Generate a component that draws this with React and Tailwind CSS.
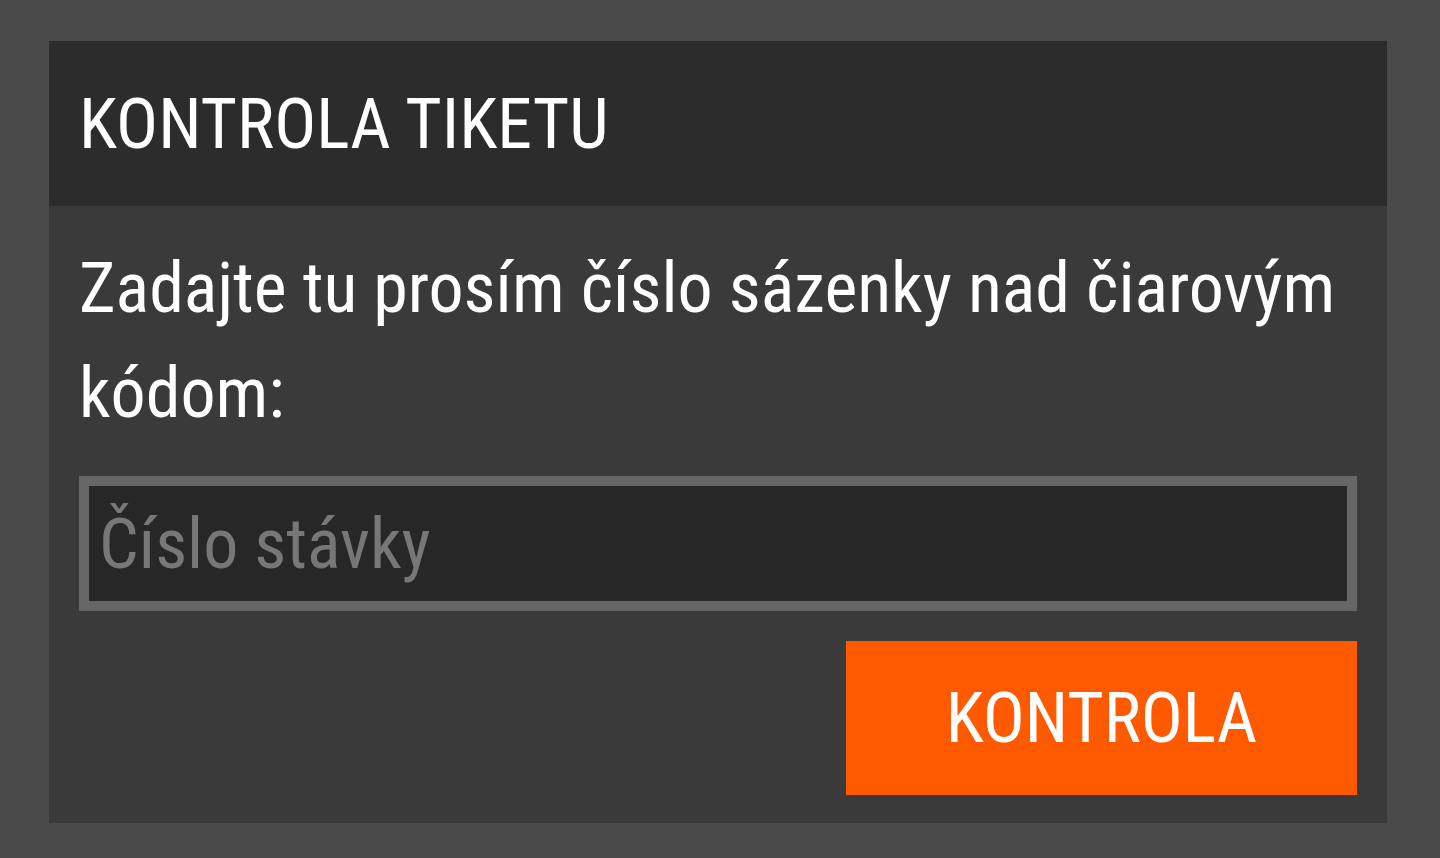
import React from 'react';

const font = { fontFamily: '"Roboto Condensed", Roboto, "Liberation Sans", sans-serif' };

export default function App() {
  return (
    <div className="min-h-screen bg-[#4a4a4a] pt-[41px] pl-[49px] pr-[53px] pb-[35px]" style={font}>
      <div className="bg-[#3a3a3a] font-stretch-condensed">
        {/* Header */}
        <div className="h-[165px] bg-[#2c2c2c] flex items-center px-[30px]">
          <h1 className="text-[70px] leading-none text-white uppercase font-normal">Kontrola tiketu</h1>
        </div>

        {/* Body */}
        <div className="px-[30px] pt-[30px] pb-[28px]">
          <p className="text-[70px] leading-[105px] text-white">
            Zadajte tu prosím číslo sázenky nad čiarovým kódom:
          </p>
          <input
            type="text"
            placeholder="Číslo stávky"
            className="mt-[30px] block w-full h-[135px] border-[10px] border-[#666666] bg-[#272727] px-[10px] text-[70px] text-white placeholder:text-[#777777] outline-none"
          />
          <div className="flex justify-end mt-[30px]">
            <button className="w-2/5 h-[154px] bg-[#ff5a00] text-white text-[70px] uppercase">
              Kontrola
            </button>
          </div>
        </div>
      </div>
    </div>
  );
}
